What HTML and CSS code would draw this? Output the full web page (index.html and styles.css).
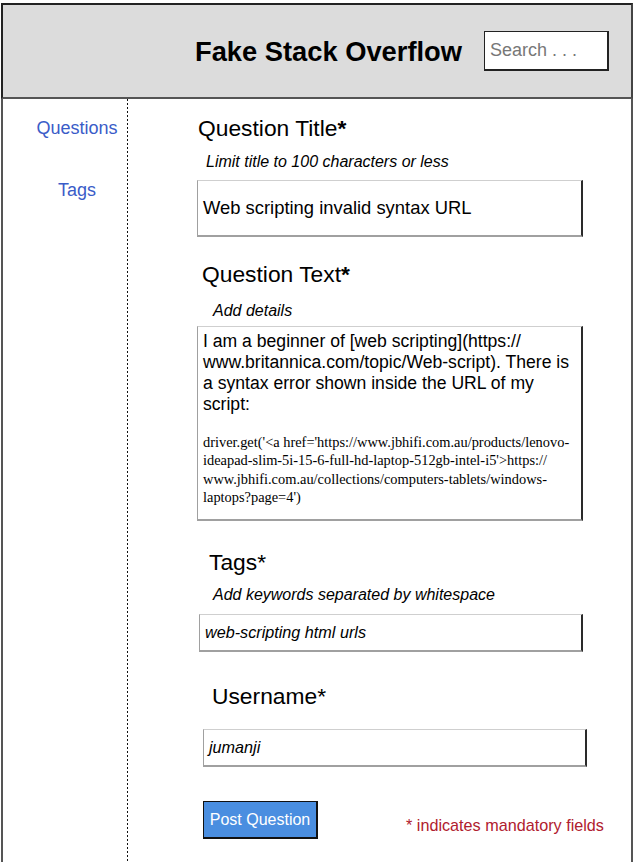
FILE: index.html
```html
<!DOCTYPE html>
<html lang="en">
<head>
<meta charset="utf-8">
<title>Fake Stack Overflow</title>
<link rel="stylesheet" href="styles.css">
</head>
<body>
<div class="page">
  <header class="header">
    <h1 class="brand">Fake Stack Overflow</h1>
    <div class="search">Search . . .</div>
  </header>
  <div class="body">
    <nav class="sidebar">
      <a class="nav-link nav-questions" href="#">Questions</a>
      <a class="nav-link nav-tags" href="#">Tags</a>
    </nav>
    <main class="main">
      <h2 class="label label-title">Question Title<b>*</b></h2>
      <p class="hint hint-title">Limit title to 100 characters or less</p>
      <div class="field field-title">Web scripting invalid syntax URL</div>

      <h2 class="label label-text">Question Text<b>*</b></h2>
      <p class="hint hint-text">Add details</p>
      <div class="field field-text">
        <p class="text-main">I am a beginner of [web scripting](https://<br>www.britannica.com/topic/Web-script). There is<br>a syntax error shown inside the URL of my<br>script:</p>
        <p class="text-code">driver.get('&lt;a href='https://www.jbhifi.com.au/products/lenovo-<br>ideapad-slim-5i-15-6-full-hd-laptop-512gb-intel-i5'&gt;https://<br>www.jbhifi.com.au/collections/computers-tablets/windows-<br>laptops?page=4')</p>
      </div>

      <h2 class="label label-tags">Tags*</h2>
      <p class="hint hint-tags">Add keywords separated by whitespace</p>
      <div class="field field-small field-tags">web-scripting html urls</div>

      <h2 class="label label-user">Username*</h2>
      <div class="field field-small field-user">jumanji</div>

      <div class="actions">
        <button class="post-btn" type="button">Post Question</button>
        <span class="mandatory">* indicates mandatory fields</span>
      </div>
    </main>
  </div>
</div>
</body>
</html>
```
FILE: styles.css
```css
* { box-sizing: border-box; }
html, body { margin: 0; padding: 0; }
body {
  font-family: "Liberation Sans", Arial, sans-serif;
  color: #000;
  background: #fff;
  padding: 3px 0 0 1px;
}
.page {
  min-height: 859px;
  border-left: 2px solid #555;
  border-right: 2px solid #555;
  display: flex;
  flex-direction: column;
}
.header {
  height: 96px;
  background: #dcdcdc;
  border-top: 2px solid #222;
  border-bottom: 2px solid #555;
  margin-left: -2px;
  margin-right: -2px;
  border-left: 2px solid #222;
  border-right: 2px solid #444;
  display: flex;
  align-items: center;
  justify-content: flex-end;
  gap: 22px;
  padding-right: 22px;
}
.brand {
  margin: 0;
  font-size: 27.3px;
  font-weight: bold;
  line-height: 32px;
  padding-top: 2px;
}
.search {
  width: 125px;
  height: 40px;
  background: #fff;
  border: 1px solid #222;
  border-right-width: 2px;
  border-bottom-width: 2px;
  color: #777;
  font-size: 18px;
  line-height: 37px;
  padding-left: 5px;
}
.body {
  flex: 1;
  display: flex;
}
.sidebar {
  width: 125px;
  flex: none;
  padding-left: 23px;
  display: flex;
  flex-direction: column;
  align-items: center;
  background-image: linear-gradient(#111 50%, transparent 50%);
  background-size: 1px 4px;
  background-repeat: repeat-y;
  background-position: right top;
}
.nav-link {
  color: #3a5cc8;
  text-decoration: none;
  font-size: 18px;
  line-height: 22px;
}
.nav-questions { margin-top: 18px; }
.nav-tags { margin-top: 40px; }
.main {
  flex: 1;
  display: flex;
  flex-direction: column;
  align-items: flex-start;
}
.label {
  margin: 0;
  font-size: 22.8px;
  font-weight: normal;
  line-height: 28px;
}
.label b { font-weight: bold; }
.hint {
  margin: 0;
  font-size: 16px;
  font-style: italic;
  line-height: 18px;
}
.field {
  width: 386px;
  border-style: solid;
  border-width: 1px 2px 2px 1px;
  border-color: #cfcfcf #2a2a2a #a0a0a0 #a0a0a0;
  background: #fff;
}
.field-title {
  height: 57px;
  margin: 9px 0 0 69px;
  font-size: 18.4px;
  line-height: 54px;
  padding-left: 5px;
}
.label-title { margin: 15px 0 0 70px; }
.hint-title { margin: 11px 0 0 78px; }
.label-text { margin: 23px 0 0 74px; }
.hint-text { margin: 14px 0 0 85px; }
.field-text {
  height: 195px;
  margin: 6px 0 0 69px;
  padding: 4px 4px 0 5px;
}
.text-main {
  margin: 0;
  font-size: 17.6px;
  line-height: 21px;
}
.text-code {
  margin: 18px 0 0 0;
  font-family: "Liberation Serif", "Times New Roman", serif;
  font-size: 14.4px;
  line-height: 18.3px;
  white-space: nowrap;
}
.label-tags { margin: 27px 0 0 81px; }
.hint-tags { margin: 10px 0 0 85px; }
.field-small {
  width: 384px;
  height: 38px;
  font-size: 16.2px;
  font-style: italic;
  line-height: 35px;
  padding-left: 5px;
}
.field-tags { margin: 10px 0 0 71px; }
.label-user { margin: 30px 0 0 84px; }
.field-user { margin: 19px 0 0 75px; }
.actions {
  margin: 34px 0 0 75px;
  display: flex;
  align-items: flex-start;
}
.post-btn {
  width: 115px;
  height: 38px;
  background: #4a8ee0;
  border: 1px solid #111;
  border-width: 1px 2px 2px 1px;
  color: #fff;
  font-family: "Liberation Sans", Arial, sans-serif;
  font-size: 16px;
  padding: 0;
}
.mandatory {
  margin: 15px 0 0 88px;
  color: #b0202e;
  font-size: 16.2px;
  line-height: 18px;
}
```
